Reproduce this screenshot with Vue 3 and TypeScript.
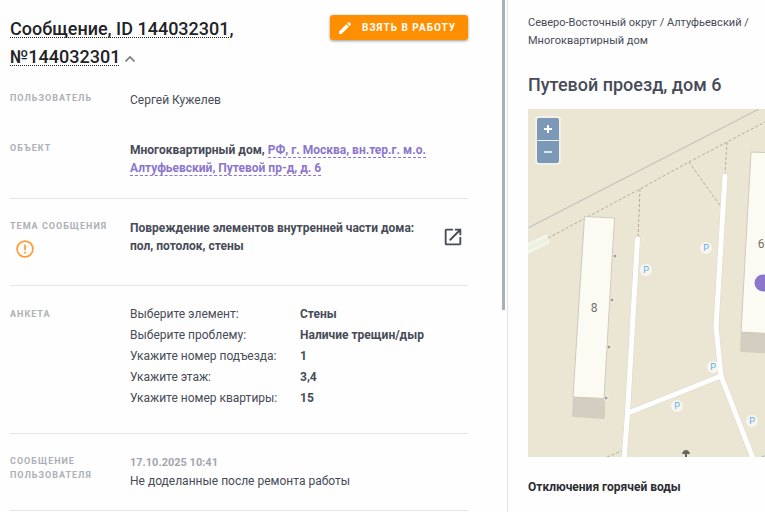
<script setup lang="ts">
interface Answer {
  question: string
  value: string
}

interface MapPoint {
  x: number
  y: number
}

const answers: Answer[] = [
  { question: 'Выберите элемент:', value: 'Стены' },
  { question: 'Выберите проблему:', value: 'Наличие трещин/дыр' },
  { question: 'Укажите номер подъезда:', value: '1' },
  { question: 'Укажите этаж:', value: '3,4' },
  { question: 'Укажите номер квартиры:', value: '15' },
]

const parkings: MapPoint[] = [
  { x: 178, y: 139 },
  { x: 118, y: 161 },
  { x: 185, y: 258 },
  { x: 149, y: 297 },
  { x: 224, y: 312 },
]

const entrances: MapPoint[] = [
  { x: 87, y: 147 },
  { x: 84, y: 191 },
  { x: 81, y: 238 },
  { x: 78, y: 289 },
]
</script>

<template>
  <div class="page">
    <main class="message">
      <header class="head">
        <h1 class="title">
          <a href="#message">Сообщение, ID 144032301</a>,<br />
          <a href="#number">№144032301</a>
          <button class="collapse" type="button" aria-label="Свернуть">
            <svg width="12" height="8" viewBox="0 0 12 8">
              <path d="M1.500 6.500 6 2l4.500 4.500" fill="none" stroke="#747982" stroke-width="1.700" />
            </svg>
          </button>
        </h1>
        <button class="take" type="button">
          <svg width="16" height="16" viewBox="0 0 24 24">
            <path
              fill="#fff"
              d="M3 17.250V21h3.750L17.810 9.940l-3.750-3.750L3 17.250zM20.710 7.040a1 1 0 0 0 0-1.410l-2.340-2.340a1 1 0 0 0-1.410 0l-1.830 1.830 3.750 3.750 1.830-1.830z"
            />
          </svg>
          Взять в работу
        </button>
      </header>

      <section class="row user">
        <h2 class="label">Пользователь</h2>
        <p class="text">Сергей Кужелев</p>
      </section>

      <section class="row object">
        <h2 class="label">Объект</h2>
        <p class="text strong">
          Многоквартирный дом,
          <a class="address" href="#address">РФ, г. Москва, вн.тер.г. м.о. Алтуфьевский, Путевой пр-д, д. 6</a>
        </p>
      </section>

      <section class="row topic">
        <div>
          <h2 class="label">Тема сообщения</h2>
          <svg class="warn" width="18" height="18" viewBox="0 0 18 18">
            <circle cx="9" cy="9" r="7.900" fill="none" stroke="#ff9a2e" stroke-width="1.700" />
            <path d="M9 4.700v5.600M9 11.700v1.700" stroke="#ff9a2e" stroke-width="1.700" />
          </svg>
        </div>
        <p class="text strong">Повреждение элементов внутренней части дома: пол, потолок, стены</p>
        <a class="open" href="#topic" aria-label="Открыть">
          <svg width="22" height="22" viewBox="0 0 24 24">
            <path
              fill="#474b57"
              d="M19 19H5V5h7V3H5a2 2 0 0 0-2 2v14a2 2 0 0 0 2 2h14c1.100 0 2-.9 2-2v-7h-2v7zM14 3v2h3.590l-9.830 9.830 1.410 1.410L19 6.410V10h2V3h-7z"
            />
          </svg>
        </a>
      </section>

      <section class="row survey">
        <h2 class="label">Анкета</h2>
        <dl class="answers">
          <template v-for="answer in answers" :key="answer.question">
            <dt>{{ answer.question }}</dt>
            <dd>{{ answer.value }}</dd>
          </template>
        </dl>
      </section>

      <section class="row comment">
        <h2 class="label">Сообщение пользователя</h2>
        <div class="text">
          <time class="date">17.10.2025 10:41</time>
          <p>Не доделанные после ремонта работы</p>
        </div>
      </section>
      <div class="thumb"></div>
    </main>

    <aside class="place">
      <p class="crumbs">Северо-Восточный округ / Алтуфьевский / Многоквартирный дом</p>
      <h2 class="street">Путевой проезд, дом 6</h2>
      <div class="map">
        <svg class="canvas">
          <path d="M0 119 231 0" stroke="#c5c3bd" stroke-width="1.200" />
          <g class="paths">
            <path d="M20 129 112 80 161 53 199 33 237 13" />
            <path d="M112 80 110 130" />
            <path d="M161 53 193 98" />
            <path d="M199 33 197 66" />
            <path d="M79 348 96 341M234 348l6-3" />
          </g>
          <path d="M0 134 19 125 22 134 0 145z" fill="#f3f6e6" />
          <path d="M0 139 20 130" stroke="#e6ebda" stroke-width="4" stroke-dasharray="1 1" />

          <g class="road-edge">
            <path d="M109.500 130 99.500 304 96 352" />
            <path d="M197 67 188 218 193 267 226 352" />
            <path d="M100 304 193 267" />
          </g>
          <path d="M45 286 77 287 77 308Q77 310 75 310L46 308Q44 308 44 306z" fill="#d3cec0" />
          <g v-for="entrance in entrances" :key="entrance.y">
            <circle :cx="entrance.x" :cy="entrance.y" r="2.500" fill="#f5f2e8" />
            <circle :cx="entrance.x" :cy="entrance.y" r="1.500" fill="#a19d93" />
          </g>
          <path d="M56.500 107.500 86.500 109 76 289.500 45 288z" fill="#fcfbf3" stroke="#cfcabb" />
          <path d="M213 222 300 226 300 248 214 243Q212 243 212 241z" fill="#d3cec0" />
          <path d="M223 43 300 46 300 228 213 223z" fill="#fcfbf3" stroke="#cfcabb" />
          <text class="house" x="66" y="203">8</text>
          <text class="house" x="233" y="139">6</text>
          <circle cx="235" cy="174" r="8.500" fill="#8b76cc" />

          <g v-for="parking in parkings" :key="parking.y">
            <circle :cx="parking.x" :cy="parking.y" r="6" fill="#f7f5ee" />
            <text class="parking" :x="parking.x" :y="parking.y + 3">P</text>
          </g>
          <g class="road">
            <path d="M109.500 130 99.500 304 96 352" />
            <path d="M197 67 188 218 193 267 226 352" />
            <path d="M100 304 193 267" />
          </g>
          <path d="M158 341Q161 341 162 345H159V348H157V345H154Q155 341 158 341z" fill="#66645f" />
        </svg>
        <div class="zoom">
          <button type="button" aria-label="Приблизить">
            <svg width="10" height="10" viewBox="0 0 10 10">
              <path d="M5 1v8M1 5h8" stroke="#fff" stroke-width="2" />
            </svg>
          </button>
          <button type="button" aria-label="Отдалить">
            <svg width="10" height="10" viewBox="0 0 10 10">
              <path d="M1 5h8" stroke="#fff" stroke-width="1.500" />
            </svg>
          </button>
        </div>
      </div>
      <h3 class="outages">Отключения горячей воды</h3>
    </aside>
  </div>
</template>

<style>
body {
  margin: 0;
  background: #fefefe;
  overflow: hidden;
}
</style>

<style scoped>
.page {
  display: grid;
  grid-template-columns: 508fr 257fr;
  min-height: 100vh;
  color: #474b57;
  font: 12px/18px Roboto, sans-serif;
}
h1,
h2,
h3,
p,
dl,
dd {
  margin: 0;
}
button {
  padding: 0;
  border: 0;
  font: inherit;
  cursor: pointer;
}
svg {
  display: block;
}
.message {
  position: relative;
  box-sizing: border-box;
  padding: 0 39px 0 10px;
  border-right: 1px solid #e3e3e6;
}
.thumb {
  position: absolute;
  top: 0;
  right: 2px;
  width: 3px;
  height: 310px;
  background: #adafb6;
}
.head {
  display: flex;
  justify-content: space-between;
  align-items: flex-start;
  padding-top: 15px;
}
.title {
  color: #212225;
  font-size: 18px;
  font-weight: 500;
  line-height: 28px;
}
.title a {
  color: inherit;
  text-decoration: underline dotted 1px;
  text-underline-offset: 2px;
  text-decoration-skip-ink: none;
}
.collapse {
  display: inline-block;
  margin-left: 4px;
  background: none;
}
.take {
  display: flex;
  align-items: center;
  gap: 9px;
  height: 25px;
  padding: 0 12px 0 7px;
  border-radius: 3px;
  background: #ff8f00;
  box-shadow: 0 1px 3px rgba(0, 0, 0, 0.4);
  color: #fff;
  font-size: 10px;
  font-weight: 700;
  letter-spacing: 1px;
  text-transform: uppercase;
}
.row {
  display: grid;
  grid-template-columns: 120px minmax(0, 1fr);
  align-items: start;
  border-bottom: 1px solid #e5e5e7;
}
.label {
  color: #adb0b6;
  font-size: 9px;
  font-weight: 700;
  line-height: 14px;
  letter-spacing: 1px;
  text-transform: uppercase;
}
.strong {
  font-weight: 700;
}
.user {
  padding: 20px 0 32px;
  border-bottom: 0;
}
.object {
  padding: 0 0 21px;
}
.address {
  border-bottom: 1px dashed #8b76cc;
  color: #8b76cc;
  text-decoration: none;
}
.topic {
  grid-template-columns: 120px minmax(0, 1fr) 26px;
  padding: 20px 0 27px;
}
.topic .text {
  padding-right: 20px;
}
.warn {
  margin: 7px 0 0 6px;
}
.open {
  padding-top: 7px;
}
.survey {
  padding: 18px 0 24px;
}
.survey .label {
  padding-top: 3px;
}
.answers {
  display: grid;
  grid-template-columns: 170px 1fr;
  line-height: 21px;
}
.answers dd {
  font-weight: 700;
}
.comment {
  padding: 20px 0;
}
.date {
  display: block;
  color: #a3a6ac;
  font-size: 11px;
  font-weight: 700;
}
.place {
  min-width: 0;
  padding: 14px 0 0 20px;
}
.crumbs {
  font-size: 11px;
}
.street {
  margin-top: 23px;
  font-size: 18px;
  font-weight: 500;
  line-height: 24px;
}
.map {
  position: relative;
  height: 348px;
  margin-top: 12px;
  overflow: hidden;
  background: #ebe6d3;
}
.canvas {
  width: 100%;
  height: 100%;
}
.paths {
  fill: none;
  stroke: #b3ac9d;
  stroke-dasharray: 3 2;
}
.road,
.road-edge {
  fill: none;
  stroke: #fff;
  stroke-width: 5;
  stroke-linecap: round;
  stroke-linejoin: round;
}
.road-edge {
  stroke: #dcd8cb;
  stroke-width: 6;
}
.house {
  fill: #74726c;
  font-size: 12px;
  text-anchor: middle;
}
.parking {
  fill: #55aeea;
  font-size: 9px;
  text-anchor: middle;
}
.zoom {
  position: absolute;
  top: 7px;
  left: 7px;
  display: grid;
  gap: 1px;
  padding: 2px;
  border-radius: 3px;
  background: #f3f0e5;
}
.zoom button {
  display: grid;
  place-items: center;
  width: 22px;
  height: 22px;
  background: #7b98b9;
}
.zoom button:first-child {
  border-radius: 2px 2px 0 0;
}
.zoom button:last-child {
  border-radius: 0 0 2px 2px;
}
.outages {
  margin-top: 21px;
  color: #2b2d33;
  font-size: 12px;
  font-weight: 700;
}
</style>
